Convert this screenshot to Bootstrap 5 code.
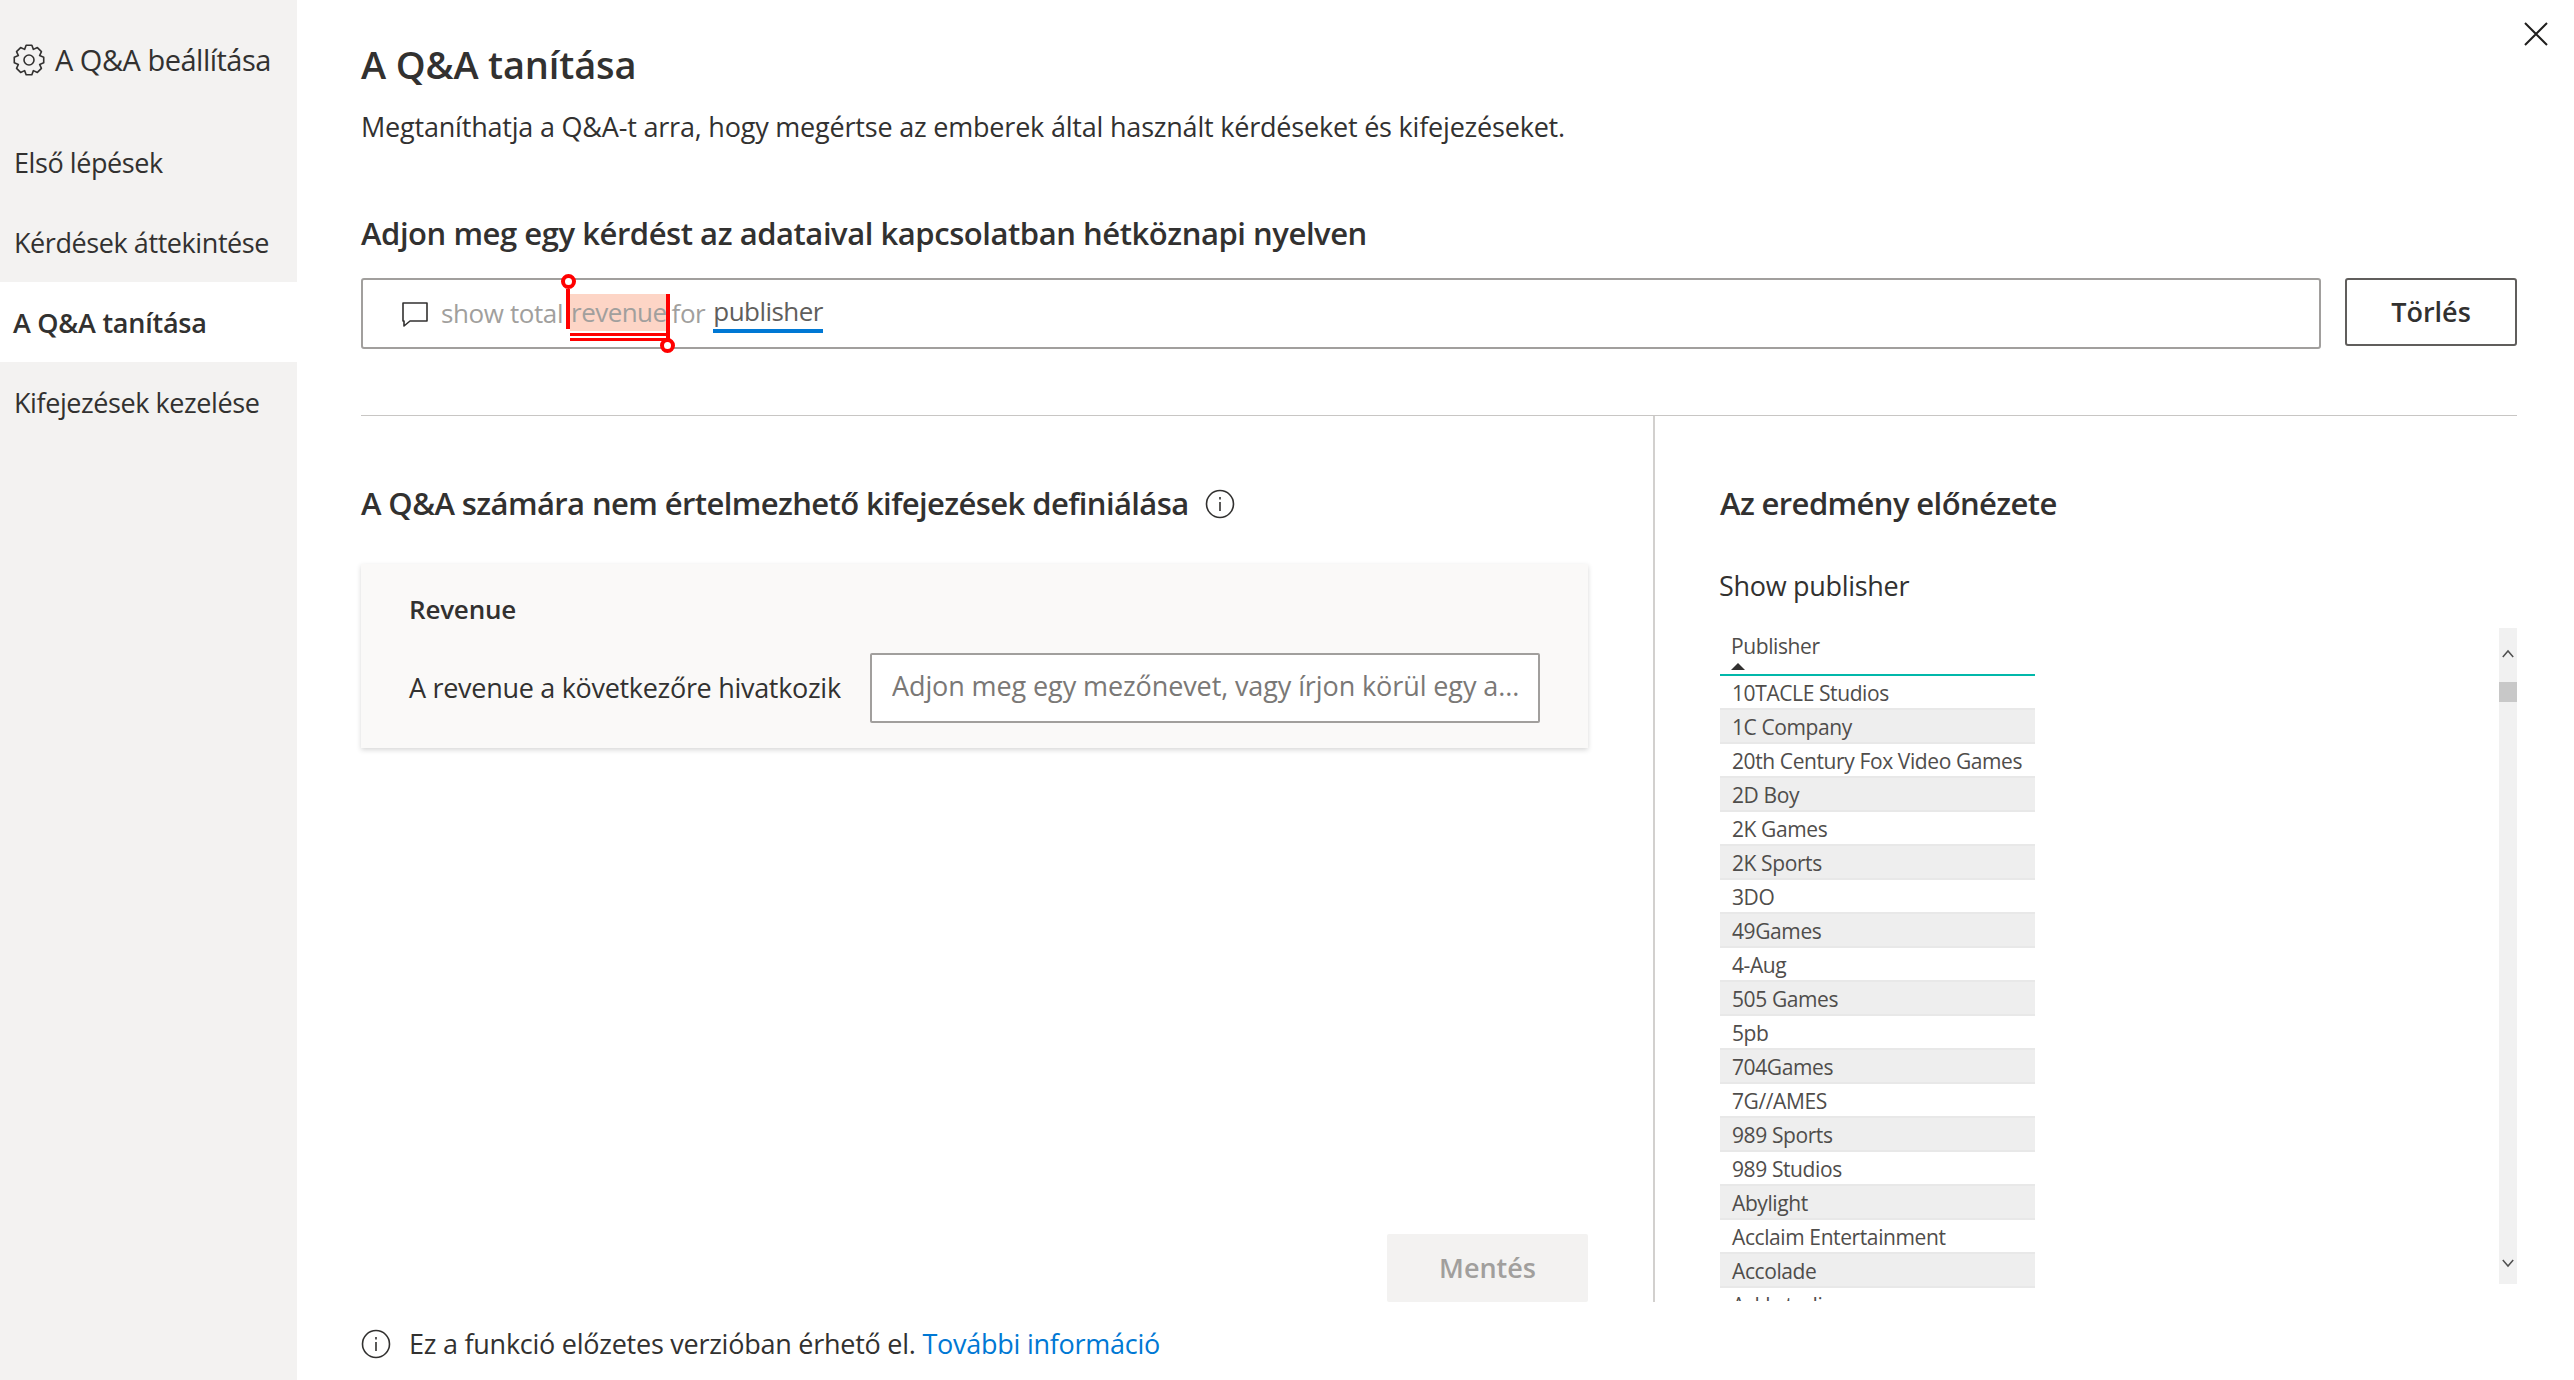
<!DOCTYPE html>
<html lang="hu">
<head>
    <meta charset="UTF-8">
    <meta name="viewport" content="width=device-width, initial-scale=1">
    <title>A Q&amp;A tanítása</title>
    <link href="https://cdn.jsdelivr.net/npm/bootstrap@5.3.2/dist/css/bootstrap.min.css" rel="stylesheet">
    <style>
        body {
            font-family: "Open Sans", "Noto Sans", sans-serif;
            color: #323130;
            background: #fff;
            overflow: hidden;
        }
        .app-shell { height: 1380px; }

        /* sidebar */
        .side-pane { width: 297px; background: #f3f2f1; flex: none; }
        .side-title { height: 122px; padding: 40px 0 0 13px; font-size: 29px; line-height: 40px; letter-spacing: -.5px; gap: 10px; }
        .side-link { height: 80px; padding: 2px 14px 0; font-size: 27px; letter-spacing: -.42px; color: #323130; }
        .side-link.active-item { background: #fff; font-weight: 600; padding-left: 13px; letter-spacing: -.25px; color: #323130; }

        /* main */
        .main-pane { padding: 39px 57px 0 64px; position: relative; min-width: 0; }
        .close-x { position: absolute; top: 22px; right: 26px; width: 24px; height: 24px; }
        .page-title { font-size: 38px; line-height: 50px; font-weight: 600; letter-spacing: -.15px; margin: 0; }
        .page-sub { font-size: 27px; line-height: 40px; margin: 18px 0 0; letter-spacing: -.2px; }
        .section-title { font-size: 31px; line-height: 44px; font-weight: 600; letter-spacing: -.6px; margin: -1px 0 1px; }
        .ask-title { margin-top: 64px; letter-spacing: -.45px; }

        .query-row { margin-top: 23px; gap: 24px; }
        .query-box { height: 71px; border: 2px solid #a19f9d; border-radius: 3px; padding-left: 39px; font-size: 26px; letter-spacing: -.4px; color: #a19f9d; }
        .query-box svg { margin-right: 13px; margin-top: 1px; flex: none; }
        .hl-term { position: relative; background: #fdd5c6; margin: -3px 4px 0 7px; padding: 0 1px; line-height: 37px; letter-spacing: -.55px; }
        .hl-term::before { content: ""; position: absolute; left: -4px; top: -5px; width: 4px; height: 40px; background: #f00; }
        .hl-term::after { content: ""; position: absolute; right: -2px; top: 0; width: 4px; height: 45px; background: #f00; }
        .hl-lines { position: absolute; left: 0; right: 0; bottom: -10px; height: 8px; border-top: 3px solid #f00; border-bottom: 3px solid #f00; }
        .hl-dot { position: absolute; width: 15px; height: 15px; border: 4px solid #f00; border-radius: 50%; background: #fff; }
        .hl-dot.dot-top { left: -9px; top: -20px; }
        .hl-dot.dot-end { right: -7px; bottom: -22px; }
        .known-term { color: #605e5c; border-bottom: 4px solid #0078d4; line-height: 36px; margin-top: -1px; letter-spacing: -.55px; }
        .clear-btn { width: 172px; height: 68px; border: 2px solid #605e5c; border-radius: 3px; font-size: 27px; font-weight: 600; color: #323130; background: #fff; padding: 0; }

        .split-area { margin-top: 66px; border-top: 1px solid #c8c6c4; height: 887px; }
        .left-col { width: 1294px; flex: none; padding: 66px 65px 0 0; border-right: 2px solid #d2d0ce; }
        .right-col { padding: 66px 0 0 65px; min-width: 0; }
        .info-ico { flex: none; }

        .term-panel { margin-top: 38px; height: 184px; padding: 30px 48px 0 48px; background: #faf9f8; box-shadow: 0 2px 5px rgba(0,0,0,.16); }
        .term-name { font-size: 26px; line-height: 30px; font-weight: 600; letter-spacing: -.2px; }
        .term-row { margin-top: 29px; }
        .term-label { font-size: 27px; letter-spacing: -.3px; width: 461px; flex: none; }
        .term-input { height: 70px; border: 2px solid #a19f9d; border-radius: 2px; font-size: 27px; letter-spacing: -.1px; padding: 0 8px 6px 20px; text-overflow: ellipsis; font-family: inherit; }
        .term-input::placeholder { color: #7a7876; opacity: 1; }

        .save-btn { width: 201px; height: 68px; border-radius: 2px; border: 0; background: #f3f2f1; color: #a19f9d; font-size: 27px; font-weight: 600; opacity: 1; padding: 0; }
        .btn.save-btn:disabled { background: #f3f2f1; color: #a19f9d; opacity: 1; }
        .foot-note { margin-top: 24px; font-size: 27px; line-height: 36px; letter-spacing: -.25px; gap: 18px; }
        .foot-note a { color: #0078d4; text-decoration: none; }

        .preview-label { font-size: 27px; line-height: 36px; letter-spacing: -.3px; margin: 43px 0 0 -1px; }
        .preview-frame { margin-top: 24px; height: 673px; }
        .pub-wrap { width: 315px; height: 673px; overflow: hidden; font-size: 21px; letter-spacing: -.4px; color: #4f4d4b; }
        .pub-head { height: 48px; border-bottom: 2px solid #01b8aa; padding: 4px 0 0 11px; line-height: 28px; position: relative; }
        .sort-tri { position: absolute; left: 11px; top: 35px; border: 7px solid transparent; border-top: 0; border-bottom-color: #323130; }
        .pub-row { height: 34px; line-height: 35px; padding-left: 12px; border-bottom: 2px solid #e8e8e8; white-space: nowrap; }
        .pub-row:nth-child(even) { background: #eeeeee; }
        .fake-scroll { width: 18px; height: 656px; background: #f1f1f1; position: relative; }
        .fake-scroll svg { position: absolute; left: 3px; }
        .fake-thumb { position: absolute; left: 0; top: 54px; width: 18px; height: 20px; background: #c8c8c8; }
    </style>
</head>
<body>
    <div class="app-shell d-flex">

        <!-- Sidebar -->
        <div class="side-pane">
            <div class="side-title d-flex align-items-start">
                <svg width="32" height="32" viewBox="0 0 32 32" class="mt-1" fill="none" stroke="#323130" stroke-width="1.6" stroke-linejoin="round">
                    <polygon points="13.14,1.28 18.86,1.28 20.4,5.37 24.39,3.56 28.44,7.61 26.63,11.6 30.72,13.14 30.72,18.86 26.63,20.4 28.44,24.39 24.39,28.44 20.4,26.63 18.86,30.72 13.14,30.72 11.6,26.63 7.61,28.44 3.56,24.39 5.37,20.4 1.28,18.86 1.28,13.14 5.37,11.6 3.56,7.61 7.61,3.56 11.6,5.37"/>
                    <circle cx="16" cy="16" r="5"/>
                </svg>
                <span>A Q&amp;A beállítása</span>
            </div>
            <nav class="nav flex-column">
                <a class="nav-link side-link d-flex align-items-center" href="#">Első lépések</a>
                <a class="nav-link side-link d-flex align-items-center" href="#">Kérdések áttekintése</a>
                <a class="nav-link side-link active-item d-flex align-items-center" href="#">A Q&amp;A tanítása</a>
                <a class="nav-link side-link d-flex align-items-center" href="#">Kifejezések kezelése</a>
            </nav>
        </div>

        <!-- Main content -->
        <div class="main-pane flex-grow-1">
            <svg class="close-x" viewBox="0 0 24 24" fill="none" stroke="#201f1e" stroke-width="2"><path d="M1 1 23 23M23 1 1 23"/></svg>

            <h1 class="page-title">A Q&amp;A tanítása</h1>
            <p class="page-sub">Megtaníthatja a Q&amp;A-t arra, hogy megértse az emberek által használt kérdéseket és kifejezéseket.</p>

            <h2 class="section-title ask-title">Adjon meg egy kérdést az adataival kapcsolatban hétköznapi nyelven</h2>
            <div class="query-row d-flex align-items-start">
                <div class="query-box flex-grow-1 d-flex align-items-center">
                    <svg width="26" height="26" viewBox="0 0 26 26" fill="none" stroke="#323130" stroke-width="1.6"><path d="M1 2H25V20H8L2 25V20H1Z" stroke-linejoin="round"/></svg>
                    <span>show total</span>
                    <span class="hl-term">revenue<span class="hl-lines"></span><span class="hl-dot dot-top"></span><span class="hl-dot dot-end"></span></span>
                    <span>for</span>
                    <span class="known-term ms-2">publisher</span>
                </div>
                <button type="button" class="btn clear-btn">Törlés</button>
            </div>

            <div class="split-area d-flex">
                <!-- Left column -->
                <div class="left-col d-flex flex-column">
                    <div class="d-flex align-items-center gap-3">
                        <h2 class="section-title">A Q&amp;A számára nem értelmezhető kifejezések definiálása</h2>
                        <svg class="info-ico" width="30" height="30" viewBox="0 0 30 30" fill="none" stroke="#323130" stroke-width="1.6"><circle cx="15" cy="15" r="13.5"/><path d="M15 13V22M15 8V10.5"/></svg>
                    </div>
                    <div class="term-panel">
                        <div class="term-name">Revenue</div>
                        <div class="term-row d-flex align-items-center">
                            <div class="term-label">A revenue a következőre hivatkozik</div>
                            <input type="text" class="form-control term-input" placeholder="Adjon meg egy mezőnevet, vagy írjon körül egy a...">
                        </div>
                    </div>
                    <div class="mt-auto d-flex justify-content-end">
                        <button type="button" class="btn save-btn" disabled>Mentés</button>
                    </div>
                </div>

                <!-- Right column -->
                <div class="right-col flex-grow-1">
                    <h2 class="section-title">Az eredmény előnézete</h2>
                    <div class="preview-label">Show publisher</div>
                    <div class="preview-frame d-flex justify-content-between align-items-start">
                        <div class="pub-wrap">
                            <div class="pub-head">Publisher<span class="sort-tri"></span></div>
                            <div>
                                <div class="pub-row">10TACLE Studios</div>
                                <div class="pub-row">1C Company</div>
                                <div class="pub-row">20th Century Fox Video Games</div>
                                <div class="pub-row">2D Boy</div>
                                <div class="pub-row">2K Games</div>
                                <div class="pub-row">2K Sports</div>
                                <div class="pub-row">3DO</div>
                                <div class="pub-row">49Games</div>
                                <div class="pub-row">4-Aug</div>
                                <div class="pub-row">505 Games</div>
                                <div class="pub-row">5pb</div>
                                <div class="pub-row">704Games</div>
                                <div class="pub-row">7G//AMES</div>
                                <div class="pub-row">989 Sports</div>
                                <div class="pub-row">989 Studios</div>
                                <div class="pub-row">Abylight</div>
                                <div class="pub-row">Acclaim Entertainment</div>
                                <div class="pub-row">Accolade</div>
                                <div class="pub-row">Ackkstudios</div>
                            </div>
                        </div>
                        <div class="fake-scroll">
                            <svg style="top:21px" width="12" height="10" viewBox="0 0 12 10" fill="none" stroke="#505050" stroke-width="1.5"><path d="M.8 8 6 2 11.2 8"/></svg>
                            <div class="fake-thumb"></div>
                            <svg style="bottom:16px" width="12" height="10" viewBox="0 0 12 10" fill="none" stroke="#505050" stroke-width="1.5"><path d="M.8 2 6 8 11.2 2"/></svg>
                        </div>
                    </div>
                </div>
            </div>

            <div class="foot-note d-flex align-items-center">
                <svg class="info-ico" width="30" height="30" viewBox="0 0 30 30" fill="none" stroke="#323130" stroke-width="1.6"><circle cx="15" cy="15" r="13.5"/><path d="M15 13V22M15 8V10.5"/></svg>
                <span>Ez a funkció előzetes verzióban érhető el. <a href="#">További információ</a></span>
            </div>
        </div>
    </div>

    <script src="https://cdn.jsdelivr.net/npm/bootstrap@5.3.2/dist/js/bootstrap.bundle.min.js"></script>
</body>
</html>
